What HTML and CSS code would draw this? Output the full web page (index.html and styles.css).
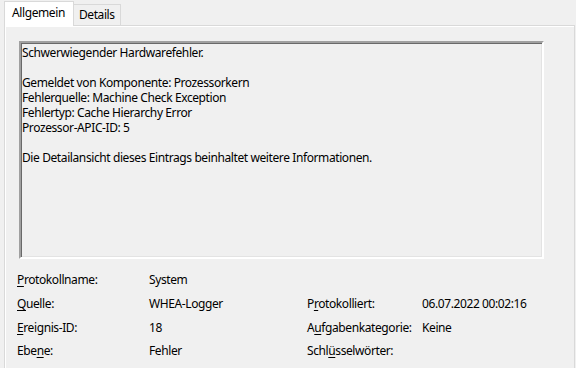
FILE: index.html
```html
<!DOCTYPE html>
<html lang="de">
<head>
    <meta charset="UTF-8">
    <title>Ereigniseigenschaften</title>
    <link rel="stylesheet" href="styles.css">
</head>
<body>
    <div class="tabs">
        <div class="tab active">Allgemein</div>
        <div class="tab">Details</div>
    </div>

    <div class="panel">
        <div class="message">
            <p>Schwerwiegender Hardwarefehler.</p>
            <p>Gemeldet von Komponente: Prozessorkern<br>
            Fehlerquelle: Machine Check Exception<br>
            Fehlertyp: Cache Hierarchy Error<br>
            Prozessor-APIC-ID: 5</p>
            <p>Die Detailansicht dieses Eintrags beinhaltet weitere Informationen.</p>
        </div>

        <div class="info">
            <span><u>P</u>rotokollname:</span>
            <span>System</span>
            <span></span>
            <span></span>

            <span><u>Q</u>uelle:</span>
            <span>WHEA-Logger</span>
            <span>P<u>r</u>otokolliert:</span>
            <span>06.07.2022 00:02:16</span>

            <span><u>E</u>reignis-ID:</span>
            <span>18</span>
            <span>A<u>u</u>fgabenkategorie:</span>
            <span>Keine</span>

            <span>Ebe<u>n</u>e:</span>
            <span>Fehler</span>
            <span>Schl<u>ü</u>sselwörter:</span>
            <span></span>
        </div>
    </div>
</body>
</html>
```

FILE: styles.css
```css
html, body {
     margin: 0;
     padding: 0;
     height: 100%;
     background-color: #f0f0f0;
     font-family: "Noto Sans", sans-serif;
     font-size: 12px;
     letter-spacing: -0.4px;
     color: #000;
     overflow: hidden;
 }

.tabs {
     display: flex;
     align-items: flex-end;
     height: 25px;
     padding-left: 4px;
 }

.tab {
     height: 20px;
     line-height: 19px;
     padding: 0 5px 0 5px;
     border: 1px solid #d9d9d9;
     border-bottom: none;
     border-left: none;
     background-color: #f0f0f0;
 }

.tab.active {
     height: 24px;
     line-height: 22px;
     padding: 0 8px 0 7px;
     margin-bottom: -1px;
     border-left: 1px solid #d9d9d9;
     background-color: #fff;
     position: relative;
     z-index: 1;
 }

.panel {
     box-sizing: border-box;
     height: calc(100% - 25px);
     margin-left: 4px;
     margin-right: 1px;
     border: 1px solid #d9d9d9;
     border-bottom: none;
     box-shadow: inset 1px 1px 0 #fff;
     padding: 15px 0 0 14px;
 }

.message {
     width: 519px;
     height: 210px;
     padding: 2px 1px;
     border: 2px solid;
     border-color: #a0a0a0 #fff #fff #a0a0a0;
     box-shadow: inset 1px 1px 0 #696969, inset -1px -1px 0 #e3e3e3;
     line-height: 15px;
 }

.message p {
     margin: 0 0 15px 0;
 }

.info {
     display: grid;
     grid-template-columns: 132px 158px 115px 1fr;
     grid-auto-rows: 23.7px;
     align-items: center;
     margin-top: 9px;
     margin-left: -2px;
 }

.info u {
     text-decoration-thickness: 1px;
     text-underline-offset: 2px;
 }
```
